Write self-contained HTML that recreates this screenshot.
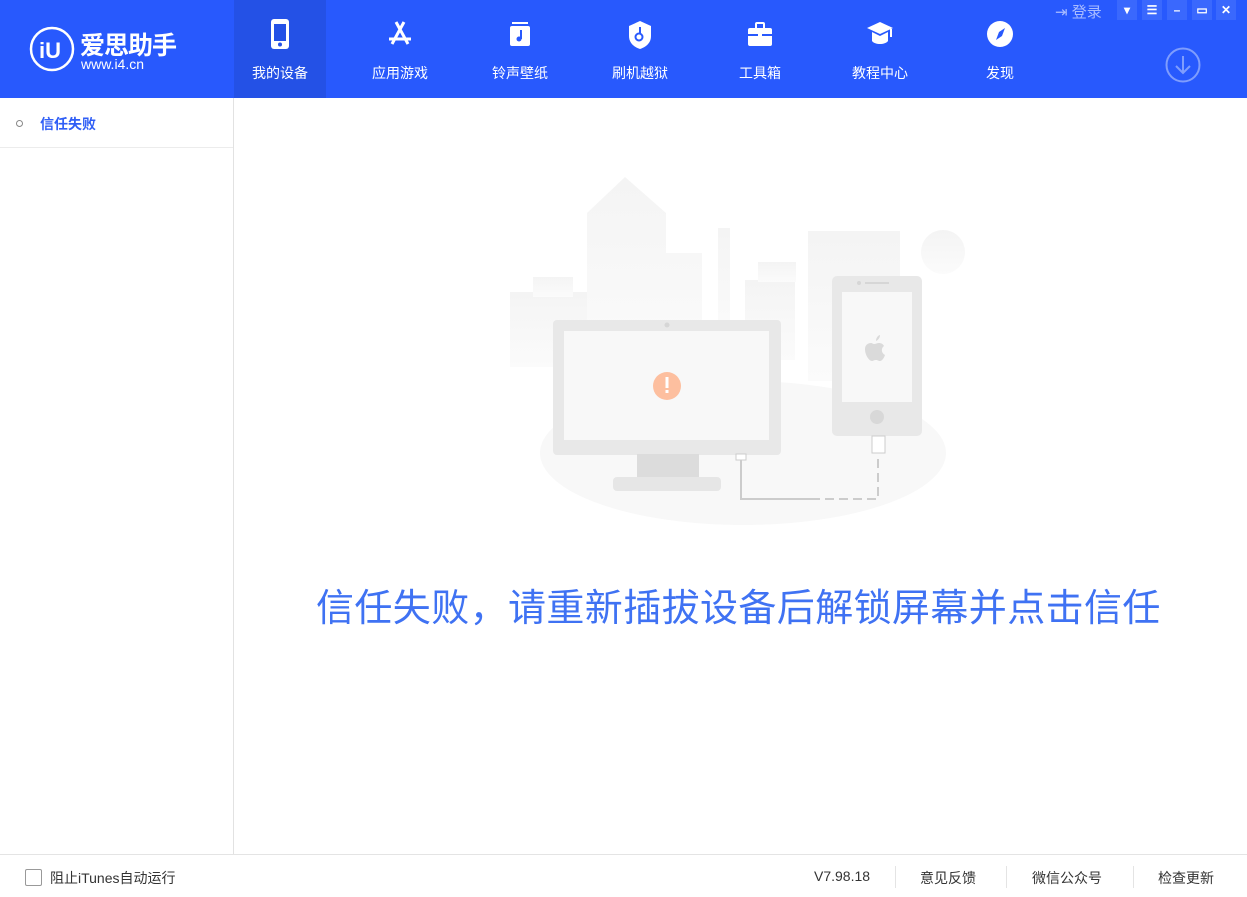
<!DOCTYPE html>
<html><head><meta charset="utf-8"><style>
*{margin:0;padding:0;box-sizing:border-box}
body{width:1247px;height:897px;overflow:hidden;background:#fff;font-family:"Liberation Sans","Noto Sans CJK SC",sans-serif;position:relative}
.hdr{position:absolute;left:0;top:0;width:1247px;height:98px;background:#2859fd}
.tab{position:absolute;top:0;width:92px;height:98px;text-align:center;color:#fff;font-size:14px}
.tab.act{background:#2451e6}
.tab svg{position:absolute;left:31px;top:18px}
.tab span{position:absolute;left:0;right:0;top:63px}
.wb{position:absolute;top:0;width:20px;height:20px;background:#3a68fd;color:#fff;font-size:12px;text-align:center;line-height:20px;font-weight:bold}
.side{position:absolute;left:0;top:98px;width:234px;height:756px;border-right:1px solid #e2e2e2}
.foot{position:absolute;left:0;top:854px;width:1247px;height:43px;border-top:1px solid #e4e4e4;font-size:14px;color:#333}
.foot span{position:absolute;top:13px}
.sep{position:absolute;top:11px;width:1px;height:22px;background:#e4e4e4}
</style></head><body>
<div class="hdr">
 <svg style="position:absolute;left:28px;top:25px" width="48" height="48" viewBox="0 0 48 48"><circle cx="24" cy="24" r="21" fill="none" stroke="#fff" stroke-width="2.5"/><text x="11" y="33" fill="#fff" font-size="22" font-weight="bold" font-family="Liberation Sans">iU</text></svg>
 <div style="position:absolute;left:80px;top:26px;color:#fff;font-size:25px;font-weight:bold;letter-spacing:-1px">爱思助手</div>
 <div style="position:absolute;left:81px;top:56px;color:#fff;font-size:14px">www.i4.cn</div>
 <div class="tab act" style="left:234px"><svg width="30" height="32" viewBox="0 0 30 32"><rect x="6" y="1" width="18" height="30" rx="3" fill="#fff"/><rect x="9" y="6" width="12" height="17" fill="#2451e6"/><circle cx="15" cy="26.5" r="2" fill="#2451e6"/></svg><span>我的设备</span></div>
 <div class="tab" style="left:354px"><svg width="30" height="32" viewBox="0 0 30 32"><path d="M11 4l12 22M19 4L7 26M4 21h22" stroke="#fff" stroke-width="3" fill="none"/></svg><span>应用游戏</span></div>
 <div class="tab" style="left:474px"><svg width="30" height="32" viewBox="0 0 30 32"><rect x="5" y="8" width="20" height="20" rx="2" fill="#fff"/><rect x="7" y="4" width="16" height="2" fill="#fff"/><path d="M16 12v9" stroke="#2859fd" stroke-width="2"/><circle cx="14" cy="21" r="2.5" fill="#2859fd"/></svg><span>铃声壁纸</span></div>
 <div class="tab" style="left:594px"><svg width="30" height="32" viewBox="0 0 30 32"><path d="M15 3l11 5v10c0 7-5 11-11 13C9 29 4 25 4 18V8z" fill="#fff"/><circle cx="14" cy="19" r="3.5" fill="none" stroke="#2859fd" stroke-width="2"/><path d="M15 16V9" stroke="#2859fd" stroke-width="2"/></svg><span>刷机越狱</span></div>
 <div class="tab" style="left:714px"><svg width="30" height="32" viewBox="0 0 30 32"><rect x="3" y="10" width="24" height="18" rx="2" fill="#fff"/><rect x="11" y="5" width="8" height="6" rx="1" fill="none" stroke="#fff" stroke-width="2"/><rect x="3" y="16" width="24" height="2" fill="#2859fd"/><rect x="13" y="15" width="4" height="4" fill="#fff"/></svg><span>工具箱</span></div>
 <div class="tab" style="left:834px"><svg width="30" height="32" viewBox="0 0 30 32"><path d="M15 4l13 6-13 6-13-6z" fill="#fff"/><path d="M7 14v9c3 4 13 4 16 0v-9l-8 4z" fill="#fff"/><path d="M26 11v8" stroke="#fff" stroke-width="2"/></svg><span>教程中心</span></div>
 <div class="tab" style="left:954px"><svg width="30" height="32" viewBox="0 0 30 32"><circle cx="15" cy="16" r="13" fill="#fff"/><path d="M20 10l-3 8-6 4 3-8z" fill="#2859fd"/></svg><span>发现</span></div>
 <div style="position:absolute;left:1055px;top:1px;color:#a9bcff;font-size:15px">⇥ 登录</div>
 <div class="wb" style="left:1117px">▾</div>
 <div class="wb" style="left:1142px">☰</div>
 <div class="wb" style="left:1167px">–</div>
 <div class="wb" style="left:1192px">▭</div>
 <div class="wb" style="left:1216px">✕</div>
 <svg style="position:absolute;left:1164px;top:46px" width="38" height="38" viewBox="0 0 38 38"><circle cx="19" cy="19" r="16.5" fill="none" stroke="#7f9dfd" stroke-width="2"/><path d="M19 10v17M12 20l7 7 7-7" fill="none" stroke="#7f9dfd" stroke-width="2"/></svg>
</div>
<div class="side">
 <div style="position:absolute;left:0;top:0;width:233px;height:50px;border-bottom:1px solid #ececec">
  <div style="position:absolute;left:16px;top:22px;width:7px;height:7px;border:1.5px solid #888;border-radius:50%"></div>
  <div style="position:absolute;left:40px;top:16px;color:#2f5ef6;font-size:14px;font-weight:bold">信任失败</div>
 </div>
</div>
<svg style="position:absolute;left:500px;top:170px" width="480" height="360" viewBox="0 0 480 360">
 <defs><linearGradient id="g" x1="0" y1="0" x2="0" y2="1"><stop offset="0" stop-color="#f4f4f4"/><stop offset="1" stop-color="#fbfbfb"/></linearGradient></defs>
 <g fill="url(#g)">
  <rect x="10" y="122" width="80" height="75"/><rect x="33" y="107" width="40" height="20"/>
  <path d="M87 43l38-36 41 36v40h36v110H87z"/>
  <rect x="218" y="58" width="12" height="110"/><rect x="245" y="110" width="50" height="80"/><rect x="258" y="92" width="38" height="20"/>
  <rect x="308" y="61" width="92" height="150"/><circle cx="443" cy="82" r="22"/>
 </g>
 <ellipse cx="243" cy="283" rx="203" ry="72" fill="#f8f8f8"/>
 <rect x="53" y="150" width="228" height="135" rx="4" fill="#e8e8e8"/>
 <rect x="64" y="161" width="205" height="109" fill="#f8f8f8"/>
 <circle cx="167" cy="155" r="2.5" fill="#d6d6d6"/>
 <circle cx="167" cy="216" r="14" fill="#fdbf9f"/><rect x="165.5" y="207" width="3" height="11" fill="#fff"/><rect x="165.5" y="220" width="3" height="3" fill="#fff"/>
 <rect x="137" y="284" width="62" height="24" fill="#dcdcdc"/>
 <rect x="113" y="307" width="108" height="14" rx="4" fill="#e6e6e6"/>
 <rect x="332" y="106" width="90" height="160" rx="5" fill="#e8e8e8"/>
 <rect x="342" y="122" width="70" height="110" fill="#f8f8f8"/>
 <circle cx="359" cy="113" r="2" fill="#d6d6d6"/><rect x="365" y="112" width="24" height="2" fill="#d6d6d6"/>
 <circle cx="377" cy="247" r="7" fill="#d8d8d8"/>
 <path d="M376 171c0-4 3-6 4-6 0 3-2 5-4 6zm-2 3c2 0 3-1 5-1 2 0 4 1 5 3-3 2-3 7 1 9-1 3-3 6-5 6-2 0-2-1-4-1s-3 1-4 1c-3 0-7-6-7-12 0-4 3-6 6-6 1 0 2 1 3 1z" fill="#dadada"/>
 <rect x="236" y="284" width="10" height="6" fill="#fff" stroke="#ccc" stroke-width="1"/>
 <path d="M241 290v39h70" stroke="#ccc" stroke-width="2" fill="none"/>
 <path d="M311 329h67v-40" stroke="#ccc" stroke-width="2" fill="none" stroke-dasharray="9 5"/>
 <rect x="372" y="266" width="13" height="17" fill="#fff" stroke="#ccc" stroke-width="1"/>
</svg>
<div style="position:absolute;left:316px;top:577px;font-size:38px;color:#3f72f3;white-space:nowrap;letter-spacing:0.4px">信任失败，请重新插拔设备后解锁屏幕并点击信任</div>
<div class="foot">
 <div style="position:absolute;left:25px;top:14px;width:17px;height:17px;border:1px solid #999;border-radius:2px"></div>
 <span style="left:50px">阻止iTunes自动运行</span>
 <span style="left:814px">V7.98.18</span><div class="sep" style="left:895px"></div>
 <span style="left:920px">意见反馈</span><div class="sep" style="left:1006px"></div>
 <span style="left:1032px">微信公众号</span><div class="sep" style="left:1133px"></div>
 <span style="left:1158px">检查更新</span>
</div>
</body></html>
